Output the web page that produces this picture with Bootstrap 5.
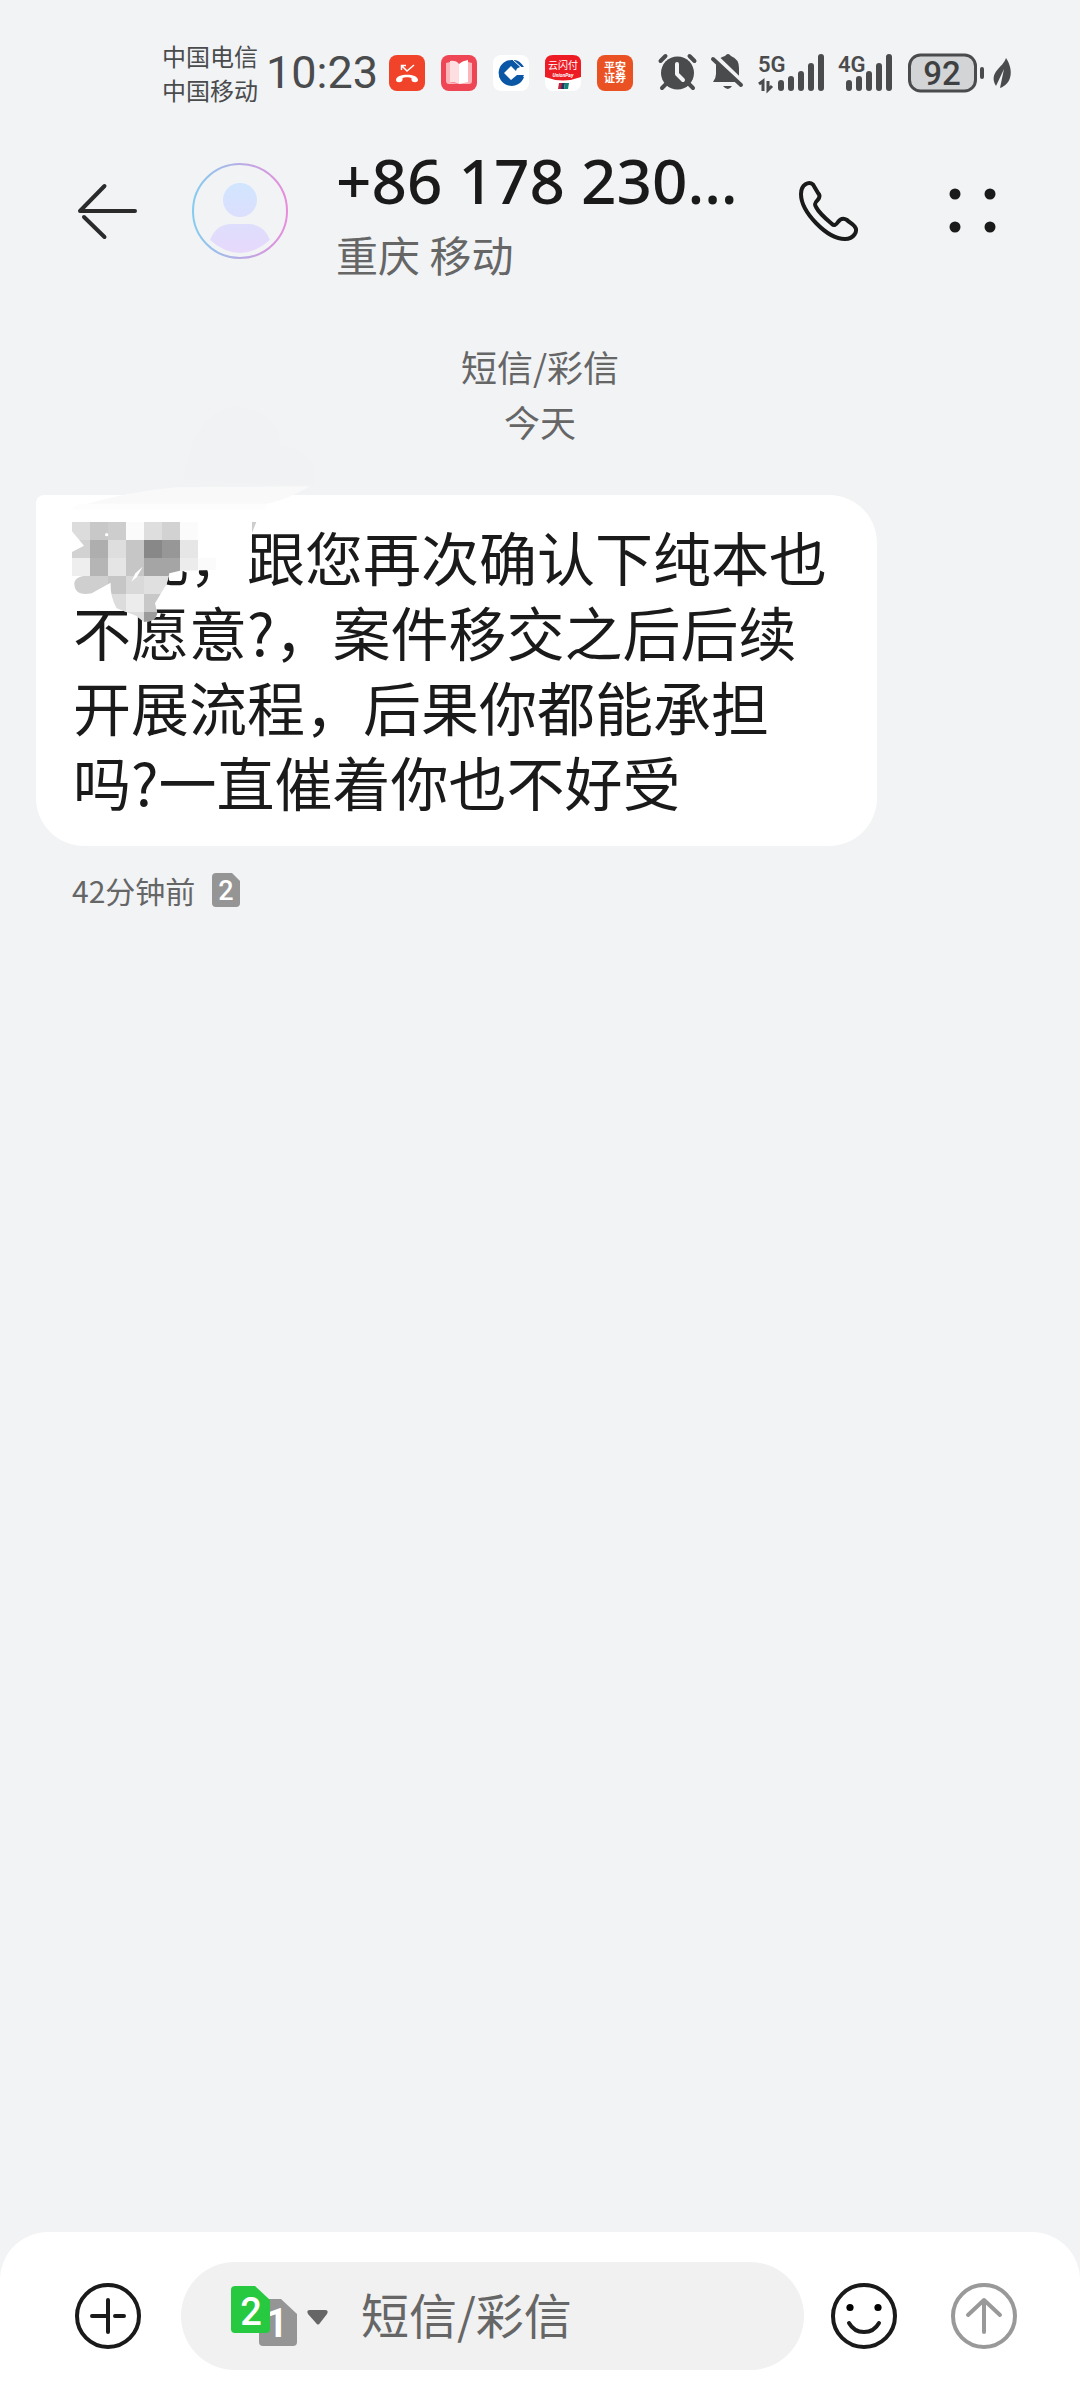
<!DOCTYPE html>
<html lang="zh-CN">
<head>
<meta charset="utf-8">
<meta name="viewport" content="width=device-width, initial-scale=1">
<title>短信/彩信</title>
<link href="https://cdn.jsdelivr.net/npm/bootstrap@5.3.0/dist/css/bootstrap.min.css" rel="stylesheet">
<style>
body{background:#f1f3f5;color:#1a1a1a;font-family:"Noto Sans CJK SC",sans-serif}
svg{display:block;flex:none;overflow:visible}
svg text{font-family:Roboto,"Noto Sans CJK SC",sans-serif}
.statusbar{padding:39px 60px 0 162px;color:#4a4b4d}
.carriers{font-size:24px;line-height:34px}
.clock{font:400 45px/68px Roboto,sans-serif;width:113px;margin-left:8px}
.apps{gap:16px;margin-left:10px}
.signals{gap:14px;margin-left:25px}
.topbar{padding:30px 71px 0 74px}
.plain-btn{background:none;border:0;padding:0;color:inherit}
.avatar{margin-left:51px}
.peer{margin-left:48px}
.peer h1{font:500 62px/86px "Noto Sans",sans-serif;margin:0}
.peer p{font-size:42px;line-height:62px;color:#666}
.call{margin-left:40px}
.more{margin-left:77px}
.daymark{font-size:36px;line-height:55px;color:#666;margin-top:54px}
.bubble{background:#fff;border-radius:8px 48px 48px 48px;width:max-content;max-width:841px;margin:46px 36px 0;padding:24px 37px 27px;font-size:58px;line-height:75px}
.smudge{left:-16px;top:-95px}
.stamp{font-size:30px;line-height:44px;color:#666;margin:22px 72px 0;gap:17px}
.composer{background:#fff;border-radius:48px 48px 0 0;padding:30px 63px 30px 75px;gap:27px}
.field{background:#f1f1f1;border-radius:54px;height:108px;min-width:0;padding:0 40px 0 50px;margin-left:13px}
.field input{font-size:48px;line-height:72px;color:#1a1a1a;background:none;border:0;padding:0 0 6px;margin-left:32px;outline:0;width:0;min-width:0}
.field input::placeholder{color:#666;opacity:1}
.emoji{margin-right:27px}
</style>
</head>
<body>
<div class="min-vh-100 d-flex flex-column">
  <div class="statusbar d-flex align-items-center">
    <div class="carriers text-nowrap"><div>中国电信</div><div>中国移动</div></div>
    <div class="clock">10:23</div>
    <div class="apps d-flex">
      <svg width="36" height="36" viewBox="0 0 36 36"><rect width="36" height="36" rx="8" fill="#f0432a"/><path d="M13 11l5 5 7-6M12.500 15v-4.500h4.500" fill="none" stroke="#fff" stroke-width="1.500"/><path d="M7 25c0-7 22-7 22 0 0 3-6 3-6.500 0v-2c-2-1-7-1-9 0v2C13 28 7 28 7 25z" fill="#fff"/></svg>
      <svg width="36" height="36" viewBox="0 0 36 36"><rect width="36" height="36" rx="8" fill="#ee4655"/><path d="M5 8l4-1v20l9 2H8q-3 0-3-3zM27 7l4 1v18q0 3-3 3H18z" fill="#fbb6bb"/><path d="M9 6q6-1 9 3v20q-4-2-9-2z" fill="#fddfe1"/><path d="M27 5q-6 1-9 4v20q4-1 9-2z" fill="#fff"/></svg>
      <svg width="36" height="36" viewBox="0 0 36 36"><rect width="36" height="36" rx="8" fill="#fff"/><path d="M20 5A13 13 0 1 0 31 22h-7l-6 5-9-9 9-9 5 5 4-2z" fill="#0b57a5"/><path d="M20 5q6-1 11 7h-4z" fill="#0b57a5"/><path d="M20 5l9 8" stroke="#fff" stroke-width="1"/><path d="M22 16h9" stroke="#0b57a5" stroke-width="0"/><path d="M18 12.500l5.500 5.500-5.500 5.500-5.500-5.500z" fill="#fff"/><path d="M18 7l6 6-1 3-5-5-7 7 7 7 6-5h7q-3 9-13 9-12-1-12-11Q7 7 18 7z" fill="#0b57a5"/></svg>
      <svg width="36" height="36" viewBox="0 0 36 36"><rect width="36" height="36" rx="8" fill="#fff"/><path d="M8 0h20q8 0 8 8v14q-18 7-36 0V8Q0 0 8 0z" fill="#ed1c24"/><text x="18" y="14" font-size="10" text-anchor="middle" fill="#fff">云闪付</text><text x="18" y="22" font-size="5" font-style="italic" font-weight="700" text-anchor="middle" fill="#fff">UnionPay</text><path d="M14 28h4l-1 6h-4z" fill="#c2243c"/><path d="M17 28h3l-1 6h-3z" fill="#24365e"/><path d="M20 28h4l-1 6h-4z" fill="#128279"/></svg>
      <svg width="36" height="36" viewBox="0 0 36 36"><rect width="36" height="36" rx="8" fill="#ea5223"/><g fill="#fff" font-size="11" font-weight="700" text-anchor="middle"><text x="18" y="16">平安</text><text x="18" y="27">证券</text></g></svg>
    </div>
    <div class="signals d-flex">
      <svg width="39" height="36" viewBox="0 0 39 36"><circle cx="19.500" cy="19" r="16.500" fill="#4a4b4d"/><path d="M2.500 7l5-5M36.500 7l-5-5M8 30l-4 4M31 30l4 4" stroke="#4a4b4d" stroke-width="4" stroke-linecap="round"/><path d="M19 10v10l6 6" fill="none" stroke="#f1f3f5" stroke-width="4" stroke-linecap="round" stroke-linejoin="round"/></svg>
      <svg width="33" height="36" viewBox="0 0 33 36"><path d="M5 10Q8 3 14 2q3-4 6 0 8 3 8 12v9l3 5H2q3-4 3-8z" fill="#4a4b4d"/><path d="M5 3l27 26" stroke="#f1f3f5" stroke-width="5"/><path d="M2 5l28 26" stroke="#4a4b4d" stroke-width="4" stroke-linecap="round"/><path d="M12 32h9q-4 6-9 0z" fill="#4a4b4d"/></svg>
      <svg width="66" height="38" viewBox="0 0 66 38"><text x="0" y="18" font-size="22" font-weight="600" fill="#4a4b4d">5G</text><path d="M23 29v5M33 25v9M43 20v14M53 12v22M63 3v31" stroke="#4a4b4d" stroke-width="6" stroke-linecap="round"/><path d="M1 30l4-3v10M10 27v9l4-4" stroke="#4a4b4d" stroke-width="3" fill="none"/></svg>
      <svg width="54" height="38" viewBox="0 0 54 38"><text x="0" y="18" font-size="22" font-weight="600" fill="#4a4b4d">4G</text><path d="M11 29v5M21 25v9M31 20v14M41 12v22M51 3v31" stroke="#4a4b4d" stroke-width="6" stroke-linecap="round"/></svg>
    </div>
    <svg class="ms-3" width="104" height="40" viewBox="0 0 104 40"><rect x="1.500" y="2" width="66" height="36" rx="11" fill="#d3d4d6" stroke="#4a4b4d" stroke-width="3"/><text x="34" y="32" font-size="33" font-weight="500" text-anchor="middle" fill="#3f4042">92</text><path d="M74 16v8" stroke="#4a4b4d" stroke-width="4" stroke-linecap="round"/><path d="M98 5c8 12 6 26-6 30l4-19-8 17c-8-14 7-18 10-28z" fill="#4a4b4d"/></svg>
  </div>

  <header class="topbar d-flex align-items-center">
    <button class="plain-btn" aria-label="返回"><svg width="67" height="64" viewBox="0 0 67 64"><path d="M61 32H6L30.500 7M10 38l20.500 20" fill="none" stroke="#2b2b2c" stroke-width="4" stroke-linecap="round" stroke-linejoin="round"/></svg></button>
    <svg class="avatar" width="96" height="96" viewBox="0 0 96 96"><defs><linearGradient id="ring"><stop stop-color="#86ccef"/><stop offset="1" stop-color="#e78ddb"/></linearGradient><linearGradient id="person" x1="0" y1="20" x2="0" y2="90" gradientUnits="userSpaceOnUse"><stop stop-color="#d1e5ff"/><stop offset="1" stop-color="#e7d9fb"/></linearGradient></defs><circle cx="48" cy="48" r="47" fill="none" stroke="url(#ring)" stroke-width="2"/><g fill="url(#person)"><circle cx="48" cy="37" r="17"/><path d="M18 77Q24 61 40 61h16q16 0 22 16-30 26-60 0z"/></g></svg>
    <div class="peer flex-grow-1 text-nowrap"><h1>+86 178 230…</h1><p class="mb-0">重庆 移动</p></div>
    <button class="plain-btn call" aria-label="拨打电话"><svg width="62" height="62" viewBox="0 0 62 62"><path d="M15 4.500C11 1 3 4 3 14c0 18 26 45 44 45 9 0 13-8 10-12-1-2-6-5-8-7-3-2-6-2-9 2-2 3-4 4-6 2C28 39 21 33 18 27c-3-5 2-6 3-9 1-2 0-4-1-5z" fill="none" stroke="#1a1a1a" stroke-width="4" stroke-linejoin="round"/></svg></button>
    <button class="plain-btn more" aria-label="更多"><svg width="72" height="62" viewBox="0 0 72 62"><g fill="#1a1a1a"><circle cx="18" cy="14" r="5.500"/><circle cx="53" cy="14" r="5.500"/><circle cx="18" cy="47" r="5.500"/><circle cx="53" cy="47" r="5.500"/></g></svg></button>
  </header>

  <main class="flex-grow-1">
    <div class="daymark text-center"><div>短信/彩信</div><div>今天</div></div>
    <div class="bubble position-relative">　兄，跟您再次确认下纯本也不愿意?，案件移交之后后续开展流程，后果你都能承担吗?一直催着你也不好受
      <svg class="smudge position-absolute" width="460" height="280" viewBox="0 0 1380 840" aria-hidden="true">
        <defs><clipPath id="blob"><path clip-rule="evenodd" d="M156 366H534V474H588V510L480 512 448 520 440 552 405 610 412 640Q408 665 372 666L350 648 290 625Q270 590 272 548L215 580Q163 590 163 550 165 532 190 528H156V456L192 437 156 394zM368 500L346 520 334 545 350 532z"/></clipPath></defs>
        <path d="M490 240Q520 40 640 22 780 30 780 140 900 150 880 255z" fill="#f1f2f4"/>
        <path d="M180 318Q320 275 468 262L870 259Q800 300 740 312L600 330z" fill="#f9f9fa"/>
        <path d="M160 320L180 311H745L730 330H160z" fill="#fdfdfd"/>
        <g clip-path="url(#blob)" shape-rendering="crispEdges">
          <path d="M156 366h432v300h-432z" fill="#fbfbfb"/>
          <path d="M156 366h54v54h-54z" fill="#dcdcdc"/><path d="M210 366h54v54h-54z" fill="#c8c8c8"/><path d="M264 366h54v54h-54z" fill="#cdcdcd"/><path d="M372 366h54v54h-54z" fill="#dedede"/><path d="M426 366h54v54h-54z" fill="#d2d2d2"/>
          <path d="M156 420h54v54h-54z" fill="#d2d2d2"/><path d="M210 420h54v54h-54z" fill="#aeaeae"/><path d="M264 420h54v54h-54z" fill="#dedede"/><path d="M318 420h54v108h-54z" fill="#c6c6c6"/><path d="M372 420h54v54h-54z" fill="#888"/><path d="M426 420h54v54h-54z" fill="#979797"/><path d="M480 420h54v54h-54z" fill="#e6e6e6"/>
          <path d="M156 474h54v54h-54z" fill="#eee"/><path d="M210 474h54v54h-54z" fill="#b5b5b5"/><path d="M264 474h54v54h-54z" fill="#e5e5e5"/><path d="M372 474h108v54h-108z" fill="#a5a5a5"/><path d="M480 474h54v54h-54z" fill="#ececec"/>
          <path d="M156 528h108v54h-108z" fill="#cfcfcf"/><path d="M264 528h54v54h-54z" fill="#c6c6c6"/><path d="M318 528h54v54h-54z" fill="#d9d9d9"/><path d="M372 528h80v54h-80z" fill="#e0e0e0"/>
          <path d="M264 582h54v54h-54z" fill="#dcdcdc"/><path d="M318 582h54v54h-54z" fill="#ececec"/><path d="M372 582h54v54h-54z" fill="#c8c8c8"/><path d="M318 636h54v30h-54z" fill="#ddd"/><path d="M372 636h54v30h-54z" fill="#9c9c9c"/>
        </g>
        <circle cx="260" cy="404" r="5" fill="#fff"/><path d="M696 366h13l-13 32z" fill="#ccc"/>
      </svg>
    </div>
    <div class="stamp d-flex align-items-center"><span>42分钟前</span><svg width="28" height="34" viewBox="0 0 28 34"><path d="M4 0h16l8 8v22q0 4-4 4H4q-4 0-4-4V4q0-4 4-4z" fill="#959595"/><text x="14" y="27" font-size="27" font-weight="500" text-anchor="middle" fill="#fff">2</text></svg></div>
  </main>

  <form class="composer d-flex align-items-center">
    <button type="button" class="plain-btn" aria-label="添加"><svg width="66" height="66" viewBox="0 0 66 66"><circle cx="33" cy="33" r="31" fill="none" stroke="#1a1a1a" stroke-width="4"/><path d="M33 17v32M17 33h16M40 33h9" stroke="#1a1a1a" stroke-width="4" stroke-linecap="round"/></svg></button>
    <div class="field d-flex align-items-center flex-grow-1">
      <button type="button" class="plain-btn" aria-label="选择SIM卡"><svg width="98" height="60" viewBox="0 0 98 60"><path d="M32 13h18l16 15v28q0 4-4 4H32q-4 0-4-4V17q0-4 4-4z" fill="#959595"/><text x="46" y="51" font-size="40" font-weight="600" text-anchor="middle" fill="#fff">1</text><path d="M4 0h20l15 14v29q0 4-4 4H4q-4 0-4-4V4q0-4 4-4z" fill="#27c940"/><text x="20" y="39" font-size="38" font-weight="500" text-anchor="middle" fill="#fff">2</text><path d="M79 24h15q4 0 2 4l-7 9q-2 3-4 0l-8-9q-2-4 2-4z" fill="#666"/></svg></button>
      <input id="msg" class="flex-grow-1" type="text" placeholder="短信/彩信" aria-label="短信/彩信">
    </div>
    <button type="button" class="plain-btn emoji" aria-label="表情"><svg width="66" height="66" viewBox="0 0 66 66"><circle cx="33" cy="33" r="31" fill="none" stroke="#1a1a1a" stroke-width="4"/><circle cx="19" cy="24.500" r="3.600"/><circle cx="47" cy="24.500" r="3.600"/><path d="M18 40q5 9 15 9t15-9" fill="none" stroke="#1a1a1a" stroke-width="4" stroke-linecap="round"/></svg></button>
    <button type="submit" class="plain-btn" aria-label="发送"><svg width="66" height="66" viewBox="0 0 66 66"><g fill="none" stroke="#999" stroke-width="4" stroke-linecap="round" stroke-linejoin="round"><circle cx="33" cy="33" r="31"/><path d="M33 49V17M17 32l16-15 16 15"/></g></svg></button>
  </form>
</div>
<script src="https://cdn.jsdelivr.net/npm/bootstrap@5.3.0/dist/js/bootstrap.bundle.min.js"></script>
</body>
</html>
